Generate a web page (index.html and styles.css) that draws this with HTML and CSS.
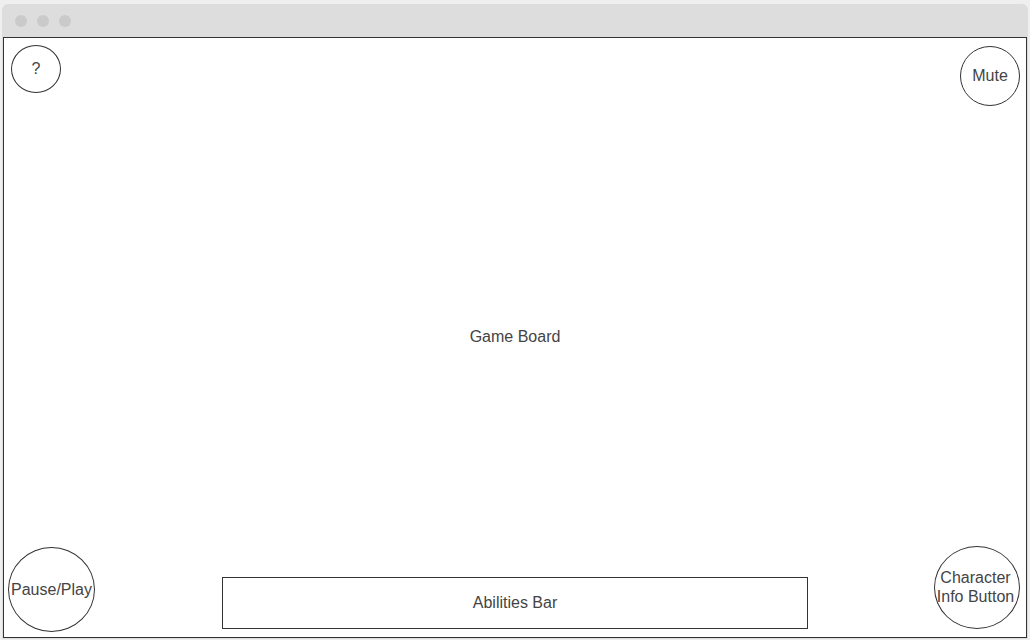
FILE: index.html
```html
<!DOCTYPE html>
<html>
<head>
<meta charset="utf-8">
<link rel="stylesheet" href="styles.css">
</head>
<body>
<div class="window">
  <div class="titlebar">
    <span class="dot"></span><span class="dot"></span><span class="dot"></span>
  </div>
  <div class="board">
    <span class="board-label">Game Board</span>
    <div class="hud circle help">?</div>
    <div class="hud circle mute">Mute</div>
    <div class="hud circle pause">Pause/Play</div>
    <div class="hud circle charinfo">Character<br>Info Button</div>
    <div class="hud abilities">Abilities Bar</div>
  </div>
</div>
</body>
</html>
```
FILE: styles.css
```css
html, body {
  margin: 0;
  padding: 0;
  background: #efefef;
  font-family: "Liberation Sans", Arial, sans-serif;
  font-size: 16px;
  color: #444;
}
.window {
  margin: 4px 0 0 2px;
  width: 1026px;
  background: #dddddd;
  border-radius: 6px 6px 0 0;
  padding: 0 1px 1px 1px;
  box-sizing: border-box;
}
.titlebar {
  height: 33px;
  display: flex;
  align-items: center;
  gap: 10px;
  padding-left: 12px;
  box-sizing: border-box;
}
.dot {
  width: 12px;
  height: 12px;
  border-radius: 50%;
  background: #cacaca;
}
.board {
  position: relative;
  height: 601px;
  border: 1px solid #333;
  background: #fff;
  box-sizing: border-box;
  display: flex;
  align-items: center;
  justify-content: center;
}
.board-label {
  margin-top: -1px;
}
.hud {
  position: absolute;
  box-sizing: border-box;
  border: 1px solid #333;
  background: #fff;
  display: flex;
  align-items: center;
  justify-content: center;
  text-align: center;
  line-height: 19px;
}
.circle {
  border-radius: 50%;
}
.help {
  left: 7px;
  top: 7px;
  width: 50px;
  height: 48px;
  padding-bottom: 2px;
}
.mute {
  left: 956px;
  top: 8px;
  width: 60px;
  height: 60px;
  padding-bottom: 2px;
}
.pause {
  left: 4px;
  top: 509px;
  width: 87px;
  height: 85px;
}
.charinfo {
  left: 930px;
  top: 508px;
  width: 86px;
  height: 83px;
  padding-bottom: 2px;
  padding-right: 3px;
}
.abilities {
  left: 218px;
  top: 539px;
  width: 586px;
  height: 52px;
  padding-bottom: 2px;
}
```
